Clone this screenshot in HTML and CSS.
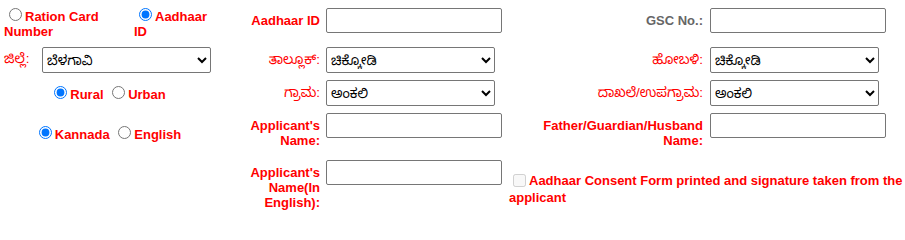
FILE: index.html
```html
<!DOCTYPE html>
<html lang="kn">
<head>
<meta charset="utf-8">
<title>Applicant Search</title>
<link rel="stylesheet" href="styles.css">
</head>
<body>
<div class="form">
  <div class="idtype">
    <span class="opt"><input type="radio" name="idtype" id="rc"><label for="rc">Ration Card Number</label></span>
    <span class="opt"><input type="radio" name="idtype" id="aa" checked><label for="aa">Aadhaar ID</label></span>
  </div>
  <div class="lbl">Aadhaar ID</div>
  <div class="fld"><input type="text" class="txt"></div>
  <div class="lbl gray">GSC No.:</div>
  <div class="fld fld-r"><input type="text" class="txt"></div>

  <div class="district">
    <span class="lbl-in kn">ಜಿಲ್ಲೆ:</span>
    <select class="sel"><option>ಬೆಳಗಾವಿ</option></select>
  </div>
  <div class="lbl kn">ತಾಲ್ಲೂಕ್:</div>
  <div class="fld"><select class="sel"><option>ಚಿಕ್ಕೋಡಿ</option></select></div>
  <div class="lbl kn">ಹೋಬಳಿ:</div>
  <div class="fld fld-r"><select class="sel"><option>ಚಿಕ್ಕೋಡಿ</option></select></div>

  <div class="center row3"><input type="radio" name="area" id="ru" checked><label for="ru">Rural</label> <input type="radio" name="area" id="ur"><label for="ur">Urban</label></div>
  <div class="lbl kn">ಗ್ರಾಮ:</div>
  <div class="fld"><select class="sel"><option>ಅಂಕಲಿ</option></select></div>
  <div class="lbl kn">ದಾಖಲೆ/ಉಪಗ್ರಾಮ:</div>
  <div class="fld fld-r"><select class="sel"><option>ಅಂಕಲಿ</option></select></div>

  <div class="center row4"><input type="radio" name="lang" id="kn" checked><label for="kn">Kannada</label> <input type="radio" name="lang" id="en"><label for="en">English</label></div>
  <div class="lbl">Applicant's Name:</div>
  <div class="fld"><input type="text" class="txt"></div>
  <div class="lbl">Father/Guardian/Husband Name:</div>
  <div class="fld fld-r"><input type="text" class="txt"></div>

  <div class="empty"></div>
  <div class="lbl">Applicant's Name(In English):</div>
  <div class="fld"><input type="text" class="txt"></div>
  <div class="consent"><input type="checkbox" id="cf" disabled><label for="cf">Aadhaar Consent Form printed and signature taken from the applicant</label></div>
</div>
</body>
</html>
```
FILE: styles.css
```css
html, body {
  margin: 0;
  padding: 0;
  background: #ffffff;
}
body {
  width: 905px;
  height: 213px;
  overflow: hidden;
  font-family: "Liberation Sans", Arial, "Noto Sans Kannada", "Lohit Kannada", sans-serif;
  font-size: 13px;
  font-weight: bold;
  color: #ff0000;
}
.form {
  display: grid;
  grid-template-columns: 207px 109px 189px 194px 1fr;
  grid-template-rows: 39px 33px 33px 47px auto;
  padding: 8px 0 0 4px;
  align-items: start;
}
.idtype {
  display: grid;
  grid-template-columns: 130px 77px;
  margin-top: -3px;
}
.opt input, .center input {
  margin: 3px 3px 0 5px;
}
.lbl {
  text-align: right;
  padding-top: 5px;
  line-height: 15px;
}
.kn {
  font-weight: normal;
  font-size: 13.5px;
}
.gray {
  color: #666666;
}
.fld {
  padding-left: 6px;
}
.fld-r {
  padding-left: 7px;
}
.txt {
  box-sizing: border-box;
  width: 176px;
  height: 25px;
  margin: 0;
  border: 1px solid #767676;
  border-radius: 2px;
  background: #ffffff;
  font: 13.33px "Liberation Sans", Arial, sans-serif;
  padding: 1px 2px;
}
.sel {
  box-sizing: border-box;
  width: 169px;
  height: 26px;
  margin: 0;
  border: 1px solid #767676;
  border-radius: 2px;
  background: #ffffff;
  color: #000000;
  font: 13.33px "Liberation Sans", Arial, "Noto Sans Kannada", sans-serif;
}
.district {
  display: flex;
  align-items: center;
  gap: 6px;
}
.lbl-in {
  width: 32px;
}
.center {
  text-align: center;
}
.row3 {
  margin-top: 3px;
}
.row4 {
  margin-top: 10px;
}
.consent {
  grid-column: 4 / 6;
  margin-top: 11px;
  line-height: 15px;
  padding-right: 2px;
}
.consent input {
  margin: 3px 3px 3px 4px;
  vertical-align: -2px;
}
```
